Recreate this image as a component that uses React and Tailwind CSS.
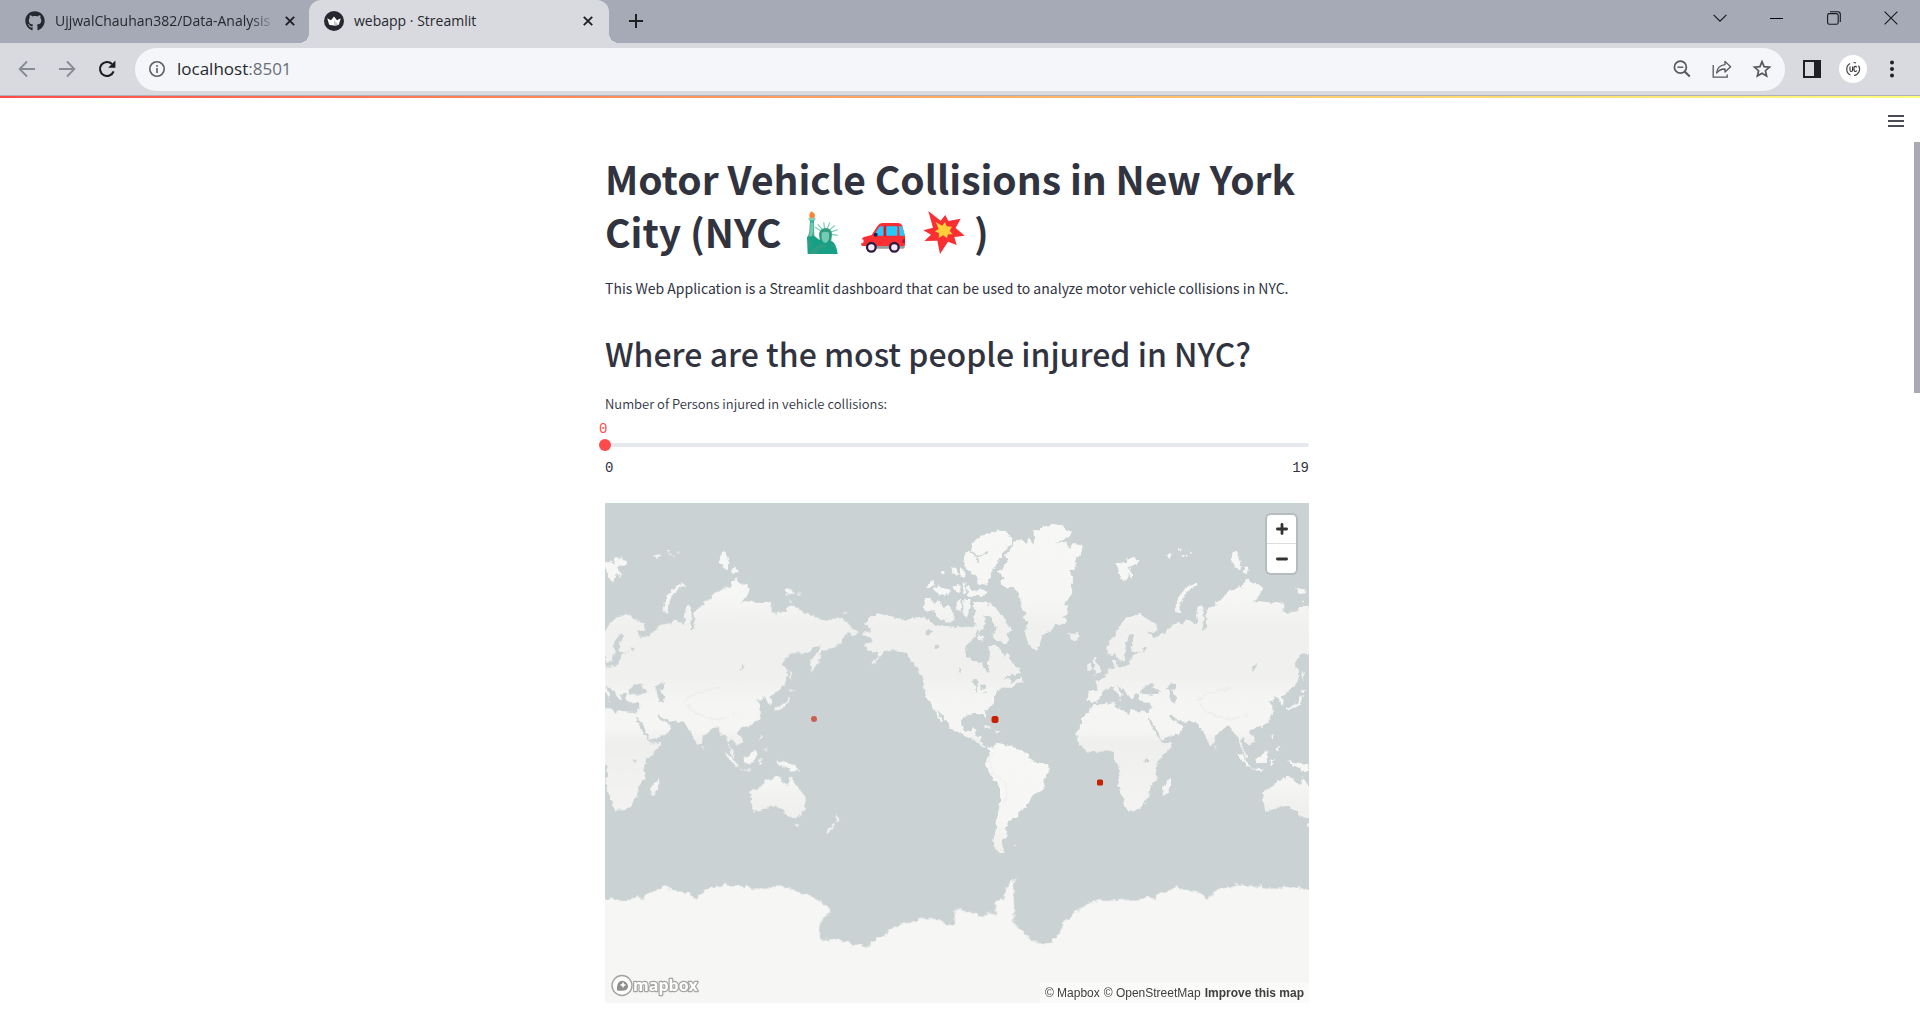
import React, { useState } from "react";
import { FaGithub } from "react-icons/fa";

function CloseIcon() {
  return (
    <svg viewBox="0 0 10 10" className="size-2.5" fill="none" stroke="#1f2024" strokeWidth="1.9">
      <path d="M.8.8 9.2 9.2M9.2.8.8 9.2" />
    </svg>
  );
}

function CrownIcon() {
  return (
    <svg viewBox="0 0 20 20" className="size-5 shrink-0">
      <circle cx="10" cy="10" r="10" fill="#262730" />
      <path d="M3.2 7.2 7 9.3 10 5.6 13 9.3 16.8 7.2 14.8 13.8Q10 15.2 5.2 13.8Z" fill="#fff" />
      <path d="M10 9 14.6 13.9Q12 14.6 10 14.7Z" fill="#c9cad0" />
    </svg>
  );
}

function Tab({ icon, title, active }) {
  return (
    <div
      role="tab"
      aria-selected={active}
      className={
        active
          ? "relative flex h-full w-75 items-center rounded-t-xl bg-[#d9dae0] pb-0.5 pl-[15px] pr-[11px]"
          : "relative flex h-full w-[309px] items-center pb-0.5 pl-[25px] pr-[9px]"
      }
    >
      {active && (
        <>
          <span className="absolute -left-2.5 bottom-0 size-2.5 bg-[radial-gradient(circle_at_0_0,#a6a9b6_10px,#d9dae0_10px)]" />
          <span className="absolute -right-2.5 bottom-0 size-2.5 bg-[radial-gradient(circle_at_100%_0,#a6a9b6_10px,#d9dae0_10px)]" />
        </>
      )}
      {icon}
      <span
        className={
          active
            ? "ml-2.5 flex-1 overflow-hidden whitespace-nowrap"
            : "ml-2.5 flex-1 overflow-hidden whitespace-nowrap [mask-image:linear-gradient(to_right,#000_88%,transparent)]"
        }
      >
        {title}
      </span>
      <button aria-label={"Close " + title} className="ml-1 grid size-5 place-items-center">
        <CloseIcon />
      </button>
    </div>
  );
}

function BrowserChrome() {
  return (
    <header className="font-['Open_Sans',sans-serif] text-[#26282d]">
      <div className="flex h-[43px] bg-[#a6a9b6] text-sm">
        <div role="tablist" className="flex h-full">
          <Tab icon={<FaGithub className="size-5 shrink-0 text-[#24292f]" />} title="UjjwalChauhan382/Data-Analysis" />
          <Tab icon={<CrownIcon />} title="webapp · Streamlit" active />
        </div>
        <button aria-label="New tab" className="ml-[17px] grid w-5 place-items-center pb-0.5">
          <svg viewBox="0 0 16 16" className="size-4" stroke="#1f2024" strokeWidth="2">
            <path d="M8 1v14M1 8h14" />
          </svg>
        </button>
        <div className="ml-auto flex h-9 items-center">
          <button aria-label="Search tabs" className="grid w-[57px] place-items-center">
            <svg viewBox="0 0 14 8" className="h-2 w-3.5" fill="none" stroke="#17181c" strokeWidth="1.1">
              <path d="M.6.8 7 7.2 13.4.8" />
            </svg>
          </button>
          <button aria-label="Minimize" className="grid w-[57px] place-items-center">
            <span className="h-px w-[13px] bg-black" />
          </button>
          <button aria-label="Restore" className="grid w-[57px] place-items-center">
            <svg viewBox="0 0 14 14" className="size-3.5" fill="none" stroke="#17181c" strokeWidth="1.1">
              <rect x=".6" y="2.6" width="10.6" height="10.6" rx="1.8" />
              <path d="M3 .8h7.8a2.5 2.5 0 0 1 2.5 2.5v7.6" />
            </svg>
          </button>
          <button aria-label="Close window" className="grid w-[58px] place-items-center">
            <svg viewBox="0 0 14 14" className="size-3.5" stroke="#17181c" strokeWidth="1.1">
              <path d="M.6.6 13.4 13.4M13.4.6.6 13.4" />
            </svg>
          </button>
        </div>
      </div>

      <div className="flex h-[53px] items-center border-b border-[#aeb0ba] bg-[#d9dae0] pl-[17px] pr-[18px]">
        <button aria-label="Back" className="grid w-5 place-items-center">
          <svg viewBox="0 0 18 18" className="size-[18px]" fill="none" stroke="#898b92" strokeWidth="1.8">
            <path d="M17 9H2M9 1.5 1.6 9 9 16.5" />
          </svg>
        </button>
        <button aria-label="Forward" className="ml-5 grid w-5 place-items-center">
          <svg viewBox="0 0 18 18" className="size-[18px]" fill="none" stroke="#898b92" strokeWidth="1.8">
            <path d="M1 9h15M9 1.5 16.4 9 9 16.5" />
          </svg>
        </button>
        <button aria-label="Reload" className="ml-5 grid w-5 place-items-center">
          <svg viewBox="0 0 18 18" className="size-[18px]" fill="none" stroke="#1b1c20" strokeWidth="2.1">
            <path d="M15.6 11.4A7 7 0 1 1 14 4" />
            <path d="M17.4.6v7.2h-7.2Z" fill="#1b1c20" stroke="none" />
          </svg>
        </button>
        <div className="ml-[18px] flex h-[43px] flex-1 items-center rounded-full bg-[#f5f6f9] pl-3.5 pr-[13px]">
          <svg viewBox="0 0 16 16" className="size-4 shrink-0" fill="none" stroke="#5c5e63" strokeWidth="1.6">
            <circle cx="8" cy="8" r="7.2" />
            <path d="M8 7v5M8 4v1.7" />
          </svg>
          <div className="ml-3 flex-1 text-[17px]">
            <span>localhost</span>
            <span className="text-[#6b6e75]">:8501</span>
          </div>
          <div className="flex items-center gap-5 text-[#55575c]">
            <button aria-label="Zoom" className="grid size-5 place-items-center">
              <svg viewBox="0 0 18 18" className="size-[18px]" fill="none" stroke="currentColor" strokeWidth="1.7">
                <circle cx="7.4" cy="7.2" r="6" />
                <path d="M4.4 7.2h6" strokeWidth="1.4" />
                <path d="m11.6 11.4 5.2 5.2" strokeWidth="2.1" />
              </svg>
            </button>
            <button aria-label="Share this page" className="grid size-5 place-items-center">
              <svg viewBox="0 0 20 18" className="h-[18px] w-5" fill="none" stroke="currentColor" strokeWidth="1.3">
                <path d="M1.2 5v12.2h14V14.5" />
                <path d="M13 1.4 18.6 6.8 13 12V9Q8 8.8 4.6 13 5.4 5.4 13 4.6Z" strokeLinejoin="round" />
              </svg>
            </button>
            <button aria-label="Bookmark this tab" className="grid size-5 place-items-center">
              <svg viewBox="0 0 20 20" className="size-5" fill="none" stroke="currentColor" strokeWidth="1.7">
                <path d="m10 2.600 2.100 5 5.400.5-4.100 3.600 1.200 5.300L10 14.200 5.400 17l1.200-5.300L2.500 8.100l5.400-.5Z" />
              </svg>
            </button>
          </div>
        </div>
        <button aria-label="Side panel" className="ml-[18px] grid w-[18px] place-items-center">
          <span className="h-[18px] w-[18px] border-2 border-r-[7px] border-[#1f2024]" />
        </button>
        <button aria-label="Profile" className="ml-[18px] grid size-7 place-items-center rounded-full bg-white">
          <svg viewBox="0 0 28 28" className="size-7" fill="none" stroke="#444" strokeWidth="1.2">
            <path d="M11 8.500A6.500 6.500 0 0 0 11.500 20M14.500 7.500Q16 7.500 17 8M19.500 10.500A6.500 6.500 0 0 1 15 20.500" />
            <g strokeWidth="1.1" stroke="#333">
              <path d="M11 11.500v3.500q0 1.500 1.300 1.500t1.300-1.500v-3.500M17.600 12.400q-.3-1-1.300-1-1.300 0-1.300 1.500v2q0 1.600 1.300 1.600 1 0 1.300-1" />
            </g>
          </svg>
        </button>
        <button aria-label="Menu" className="ml-[15px] grid w-5 place-items-center">
          <svg viewBox="0 0 4 18" className="h-[18px] w-1" fill="#1f2024">
            <circle cx="2" cy="2.5" r="2" />
            <circle cx="2" cy="9" r="2" />
            <circle cx="2" cy="15.5" r="2" />
          </svg>
        </button>
      </div>
    </header>
  );
}

function Statue() {
  return (
    <svg role="img" aria-label="Statue of Liberty" viewBox="61 33 132 132" className="mx-1 inline-block size-11 align-[-7px]">
      <path d="M89 47q0-8 6-13l8 6q6 8 0 14h-12Z" fill="#ff822d" />
      <path d="M86 53h22l-2 9h-18Z" fill="#7fd1bd" />
      <path d="M91 61h12l1 52-16 12-6-8 7-22Z" fill="#4aa88e" />
      <path d="M93 68h8v28l-12 24-3-4 6-24Z" fill="#73cbb3" />
      <g stroke="#73cbb3" strokeWidth="3.4">
        <path d="m124 92-18-10M128 88 114 73M135 86l-3-19M143 86l7-18M149 90l17-14M153 96l21-7M154 103l20 3" />
      </g>
      <path d="M118 104q2-20 20-20t19 20l-3 22h-33Z" fill="#319b81" />
      <path d="M82 110l22-2 16 12 34 2q16 6 20 40H84Z" fill="#16a085" />
      <path d="M126 98q12-6 22 0v18q-4 12-11 13-9-3-11-13Z" fill="#73cbb3" />
      <path d="M84 162q28-28 48-30l14 6q-26 2-34 24ZM148 128l20 12-8 2ZM84 112l14 22-12 12Z" fill="#2f9d83" />
    </svg>
  );
}

function Car() {
  return (
    <svg role="img" aria-label="Car" viewBox="243 33 132 132" className="mx-1 inline-block size-11 align-[-7px]">
      <path d="M262 134h112v8q0 4-4 4H262Z" fill="#9b9b9b" />
      <path d="M245 120q0-8 10-10l20-5 18-28q5-8 14-8h48q9 0 12 8l8 32v25q0 4-4 4H249q-6 0-6-6Z" fill="#f92f33" />
      <path d="m283 104 14-22q2-3 6-3h7v28h-27ZM319 79h33v28h-33ZM357 79h6q4 0 5 4l7 24h-16Z" fill="#26c9fc" />
      <path d="M312 79h6v30h-6Z" fill="#ce1d2b" />
      <circle cx="287" cy="104" r="6" fill="#2c1d4a" />
      <path d="M243 118h6q5 6 0 12h-6Z" fill="#f4f4f4" />
      <path d="M375 116h-4q-7 6-4 13h8Z" fill="#b4133a" />
      <g fill="#f4e9f8" stroke="#321b41" strokeWidth="7">
        <circle cx="274" cy="142" r="13" />
        <circle cx="343" cy="142" r="13" />
      </g>
    </svg>
  );
}

function Burst() {
  return (
    <svg role="img" aria-label="Collision" viewBox="425 33 132 132" className="mx-1 inline-block size-11 align-[-7px]">
      <path d="M444 33 481 62 495 45 504 63 541 56 526 84 553 107 522 111 529 135 503 125 479 162 471 122 432 123 452 104 429 91 458 83Z" fill="#f92f33" />
      <path d="M466 66 486 77 494 66 499 79 515 80 508 92 517 103 503 103 500 114 488 106 475 114 476 100 464 94 475 87Z" fill="#ffcf3b" />
    </svg>
  );
}

function WorldLand() {
  return (
    <>
      <g fill="url(#relief)">
        <path d="M-74 572H-44L-41 560-52 542-34 540-21 528-8 510 8 503 1 484 12 474 15 488 17 499 34 500 54 493 57 480 64 465 72 459 91 456 60 455 56 440 64 425 70 408 64 400 54 403 44 425 38 438 46 452 38 468 36 480 22 488 18 474 9 462 1 468-11 462-14 440-2 420 10 405 20 385 30 368 50 352 85 342 97 352 130 372 137 388 128 396 107 392 118 402 125 415 135 410 155 400 168 388 180 375 200 370 215 370 222 358 240 365 250 375 255 365 252 345 258 320 268 316 274 335 275 370 270 393 280 388 285 365 280 345 290 325 310 318 310 305 330 300 335 285 370 265 390 262 400 240 410 235 415 250 440 253 450 268 440 290 420 308 440 303 490 310 495 303 513 310 515 335 527 342 530 335 560 335 562 320 575 317 605 328 610 340 640 345 650 355 690 362 700 352 720 355 745 370 758 385 772 395 765 408 750 400 740 400 728 415 725 430 700 440 690 450 665 452 660 465 655 490 645 500 635 518 630 495 633 480 655 455 665 433 650 440 640 440 625 458 600 458 572 460 560 472 545 495 560 508 562 525 555 548 540 565 525 580 508 590 515 610 508 617 502 605 495 592 487 592 480 602 467 600 480 612 483 640 475 660 455 675 430 682 415 690 412 700 428 715 425 728 410 738 400 725 390 712 387 730 394 750 405 765 405 780 390 757 382 725 378 708 365 705 355 680 345 680 330 690 308 710 305 730 295 740 285 720 275 695 262 680 250 665 215 665 190 655 175 643 170 645 180 660 200 668 215 680 205 700 150 720 135 690 120 665 110 652 108 655 125 690 145 720 150 730 180 728 180 735 165 755 135 785 130 810 137 835 115 860 112 885 95 915 75 930 43 932 35 900 26 880 16 850 22 825 19 800 7 780 6 757-16 750-36 755-74 755-96 735-106 715-108 700-101 690-86 650-61 622-54 612-26 613 7 605 9 622 34 630 49 639 54 630 79 634 109 637 118 620 117 607 100 608 85 605 78 595 80 583 72 580 62 586 66 598 60 601 50 588 38 572 26 562 14 556 24 572 34 585 28 588 24 597 18 582 8 570-2 558-10 568-21 570-34 588-46 605-61 605-74 600Z" />
        <path d="M-56 470-46 472-50 485-36 500-32 515-36 522-54 525-46 512-56 505-52 495-60 490ZM-74 515V497L-64 488-62 500-66 515ZM187 330 200 290 220 265 250 248 257 255 230 270 212 295 202 325 206 342 192 335ZM358 185 362 155 375 152 388 190 385 208 370 200ZM392 215 402 198 413 212 400 222ZM550 265 580 268 582 280 560 283ZM590 278 605 282 595 284ZM568 302H576V306H568ZM728 337 742 337 736 342ZM523 632 525 622 545 618 560 605 562 588 569 590 568 605 555 620 540 628ZM563 570 584 570 572 578ZM570 510 576 520 575 540 568 530ZM305 737 311 744 308 748ZM160 168 168 162 182 160 172 174ZM200 146 212 148 206 158ZM205 162H216L212 168ZM220 164 228 166 222 172ZM232 156 242 158 234 161ZM28 600 32 606 24 604Z" />
        <g transform="translate(-96)">
          <path d="M107 188 125 185 140 192 138 176 160 172 176 182 170 195 145 200 160 225 158 236 148 220 132 248 120 230 115 210Z" />
        </g>
        <g transform="translate(0 540)">
          <path d="M450 335 480 322 500 300 520 297 525 288 545 293 543 305 565 315 572 290 580 305 590 320 617 350 615 385 600 410 585 415 565 410 550 390 525 378 500 382 480 393 460 395 455 370ZM583 430H597L594 441 586 440ZM705 402 722 415 712 428 708 415ZM705 430 700 443 683 462 678 455 690 440ZM525 240 543 246 585 252 602 278 590 272 572 276 562 262 540 256ZM430 235 450 225 465 208 470 225 460 248 435 250ZM373 217 395 230 417 260 405 258 385 235ZM417 265 455 268 452 272 420 269ZM474 240 486 236 480 244 488 252 480 256ZM478 170 485 160 482 182ZM490 205 502 200 500 211ZM150 325 175 292 178 305 165 345 153 347Z" />
        </g>
        <g transform="translate(900)">
          <path d="M-92 355-68 340-20 350 15 362 50 352 75 355 95 368 110 377 140 378 165 380 190 382 215 385 225 370 235 385 228 400 222 412 205 430 195 455 200 472 225 482 245 490 255 510 265 518 268 505 262 490 272 475 268 460 265 435 285 435 300 450 315 470 322 460 335 485 355 505 360 520 320 530 310 540 330 537 332 552 345 545 360 532 372 545 350 550 335 560 315 560 295 570 285 590 275 615 255 635 258 660 252 655 245 642 220 642 190 650 183 670 190 692 215 692 218 685 228 688 222 703 240 710 247 732 265 742 245 738 225 720 200 708 180 703 152 685 140 665 125 645 106 622 130 665 126 668 108 642 92 610 75 590 70 560 72 540 55 510 35 485 20 462 0 452-25 450-45 452-55 465-75 490-90 490-65 470-65 455-85 458-105 440-100 430-85 425-90 412-112 405-110 397-90 398-88 385-108 372Z" />
          <path d="M220 305 235 302 250 308 265 305 280 315 290 330 310 350 330 385 335 395 320 400 328 420 315 435 300 425 285 420 272 405 285 400 290 385 280 370 275 350 250 348 255 365 240 400 232 385 222 350 232 335 218 322ZM68 325 75 293 95 295 100 310 118 302 130 320 150 318 155 335 168 358 150 370 110 350 100 330 80 335ZM168 310 185 298 182 335 168 325ZM190 300 212 300 208 325 200 360 190 345ZM232 402 252 412 248 422 230 415ZM78 262 90 245 105 238 100 258 85 265ZM100 268 115 255 130 265 148 268 148 280 120 288ZM155 260 180 255 182 278 165 272ZM152 200 170 208 178 225 160 222ZM180 205 195 215 192 235 180 228ZM120 215 132 212 130 222 122 222ZM188 245H196V282H190ZM200 262 210 255 215 272 250 268 262 278 255 288 205 287ZM190 180 200 155 215 148 215 128 240 110 260 100 285 92 310 92 338 112 335 130 310 155 295 185 285 200 278 215 270 235 262 255 230 250 235 235 210 215 195 205Z" />
          <path d="M293 215 325 185 315 165 330 150 340 125 365 118 380 135 385 112 405 135 400 95 430 80 460 72 490 75 500 92 512 100 510 112 465 130 500 125 505 145 515 130 548 137 545 155 525 180 530 200 510 215 520 245 510 260 517 280 505 300 490 310 505 325 500 345 480 355 500 352 495 365 460 378 450 395 428 405 420 430 412 453 395 445 380 420 375 390 383 370 370 350 375 335 362 320 360 285 345 265 310 260 300 245 315 235ZM500 398 515 402 535 396 540 408 525 422 508 418 512 408ZM250 675 262 677 278 687 268 686ZM286 690 305 696 290 697Z" />
          <g transform="translate(0 660)">
            <path d="M262 82 272 84 290 68 330 75 345 85 380 98 385 115 415 130 440 132 450 148 435 175 430 205 420 215 395 225 388 250 370 270 355 275 355 290 335 295 322 310 318 335 320 350 308 360 308 385 317 397 300 400 285 385 280 360 287 330 292 290 300 250 300 195 278 180 265 150 256 140 260 120 272 105ZM344 374H350V378H344Z" />
          </g>
        </g>
      </g>
      <path
        transform="translate(0 540)"
        fill="#f6f6f4"
        d="M15 658 40 656 68 663 90 657 110 648 130 658 140 640 180 628 195 615 212 628 270 640 285 657 325 622 370 620 374 607 378 615 420 617 430 625 443 614 455 626 510 626 518 620 550 620 585 630 610 643 630 647 660 665 690 682 690 700 668 715 660 745 660 770 668 783 680 777 710 778 745 785 755 793 790 796 803 802 830 772 850 772 870 745 915 730 955 720 962 708 970 714 1020 718 1040 735 1065 733 1063 690 1090 688 1095 697 1130 700 1150 712 1168 695 1190 707 1185 690 1190 675 1178 672 1200 655 1213 660 1216 630 1230 608 1255 592 1239 610 1241 640 1243 700 1238 727 1270 755 1292 780 1315 790 1348 790 1385 752 1392 720 1410 717 1420 700 1450 680 1460 670 1500 660 1520 664 1556 657V1100H10V658Z"
      />
      <g fill="#cad2d3">
        <path d="M85 578 88 570 100 557 118 550 128 552 122 562 140 570 140 578 120 584 95 582ZM165 562 180 550 192 552 192 565 178 570 185 580 193 590 192 607 178 605 172 590 174 578ZM418 512 430 492 433 497 424 511ZM98 778 108 776 109 786 98 788ZM90 445 100 440 105 448 96 455Z" />
        <path transform="translate(900)" d="M72 400 85 388 97 396 84 407ZM103 440 115 434 119 441 108 448ZM177 505 184 508 186 516 179 513ZM212 546 225 538 240 545 236 553 232 550 230 580 225 575 226 553ZM240 560 250 552 260 562 245 570ZM245 580 260 576 258 580ZM258 314 268 312 266 322Z" />
      </g>
      <path d="M1112 152Q1122 170 1135 168T1164 156M1130 172 1136 188" fill="none" stroke="#cad2d3" strokeWidth="5" />
      <g fill="none" stroke="#e2e3e2" strokeWidth="3" strokeLinecap="round" opacity=".75">
        <path d="M262 615Q285 640 320 652T380 652M250 602 290 580 360 562M400 648 410 636" />
        <path d="M1190 740 1168 780 1180 820 1216 850 1222 880 1212 910" strokeWidth="2" />
      </g>
    </>
  );
}

function WorldMap() {
  return (
    <svg
      role="img"
      aria-label="World map with collision locations"
      viewBox="0 0 704 500"
      preserveAspectRatio="xMidYMid slice"
      className="block h-[500px] w-full bg-[#cad2d3]"
    >
      <defs>
        <linearGradient id="relief" gradientUnits="userSpaceOnUse" x1="0" y1="60" x2="0" y2="960">
          <stop offset="0" stopColor="#f7f7f5" />
          <stop offset=".26" stopColor="#f6f6f4" />
          <stop offset=".36" stopColor="#f0f0ee" />
          <stop offset=".52" stopColor="#f0f0ee" />
          <stop offset=".6" stopColor="#f5f5f3" />
          <stop offset=".7" stopColor="#f5f5f3" />
          <stop offset=".74" stopColor="#efefed" />
          <stop offset=".9" stopColor="#f2f2f0" />
          <stop offset="1" stopColor="#f4f4f2" />
        </linearGradient>
        <filter id="coast" x="0" y="0" width="100%" height="100%">
          <feTurbulence type="fractalNoise" baseFrequency="0.22" numOctaves="2" seed="4" result="noise" />
          <feDisplacementMap in="SourceGraphic" in2="noise" scale="5" xChannelSelector="R" yChannelSelector="G" />
        </filter>
        <g id="world">
          <WorldLand />
        </g>
      </defs>
      <g filter="url(#coast)">
        <rect x="-20" y="-20" width="744" height="540" fill="#cad2d3" />
        <g transform="translate(-5 -3) scale(.33333)">
          <use href="#world" x="-1536" />
          <use href="#world" />
          <use href="#world" x="1536" />
        </g>
      </g>
      <circle cx="209" cy="216" r="3" fill="#cb5f50" />
      <rect x="386.500" y="213" width="7" height="7" rx="2.500" fill="#c91e00" />
      <rect x="492" y="276.500" width="6" height="6" rx="1.500" fill="#c91e00" />
    </svg>
  );
}

function MapboxLogo() {
  return (
    <svg viewBox="0 0 100 23" className="h-[23px] w-25">
      <circle cx="11" cy="11.500" r="10" fill="#fff" stroke="#a3a3a1" strokeWidth="1.4" />
      <path d="M6 16.500Q5.500 10.500 8 8a5.500 5.500 0 0 1 7.800 7.600Q13 17.500 6 16.500Z" fill="#8f8f8d" />
      <path d="m12 7.600 1 2.300 2.300 1-2.300 1-1 2.300-1-2.300-2.300-1 2.300-1Z" fill="#fff" />
      <text
        x="22"
        y="17"
        fontFamily="Open Sans, sans-serif"
        fontWeight="700"
        fontSize="16"
        fill="#fff"
        stroke="#a3a3a1"
        strokeWidth="2.4"
        paintOrder="stroke"
        strokeLinejoin="round"
      >
        mapbox
      </text>
    </svg>
  );
}

function InjurySlider() {
  const [value, setValue] = useState(0);
  return (
    <div>
      <label htmlFor="injured" className="block text-[13px] font-[350] leading-5">
        Number of Persons injured in vehicle collisions:
      </label>
      <div className="relative mt-[25px] h-3">
        <output
          htmlFor="injured"
          className="absolute -top-5 -ml-1.5 font-['Liberation_Mono',monospace] text-sm leading-5 text-[#ff4b4b]"
          style={{ left: (value / 19) * 100 + "%" }}
        >
          {value}
        </output>
        <div className="absolute inset-x-0 top-1 h-1 rounded-sm bg-[#e6e8f0]" />
        <input
          id="injured"
          type="range"
          min="0"
          max="19"
          value={value}
          onChange={(e) => setValue(Number(e.target.value))}
          className="absolute -left-1.5 top-0 block h-3 w-[calc(100%+12px)] appearance-none bg-transparent [&::-webkit-slider-thumb]:size-3 [&::-webkit-slider-thumb]:appearance-none [&::-webkit-slider-thumb]:rounded-full [&::-webkit-slider-thumb]:bg-[#ff4b4b]"
        />
      </div>
      <div className="mt-[7px] flex justify-between font-['Liberation_Mono',monospace] text-sm leading-5">
        <span>0</span>
        <span>19</span>
      </div>
    </div>
  );
}

export default function App() {
  return (
    <div className="flex h-screen flex-col overflow-hidden bg-white">
      <BrowserChrome />
      <div className="h-0.5 shrink-0 bg-linear-to-r from-[#ff4b4b] to-[#fffd80]" />
      <div className="relative flex-1 overflow-hidden">
        <button aria-label="App menu" className="absolute right-4 top-[17px] flex w-4 flex-col gap-[3px]">
          <span className="h-0.5 w-full bg-[#4a4b57]" />
          <span className="h-0.5 w-full bg-[#4a4b57]" />
          <span className="h-0.5 w-full bg-[#4a4b57]" />
        </button>
        <div className="absolute right-0 top-11 h-[251px] w-1.5 bg-[#a9aab2]" />
        <main className="mx-auto w-full max-w-[710px] pr-1.5 pt-[54px] font-['Noto_Sans_CJK_JP',sans-serif] text-[#31333f]">
          <h1 className="text-[39px] font-bold leading-[53px]">
            Motor Vehicle Collisions in New York City (NYC{" "}
            <span className="ml-1.5 mr-1">
              <Statue /> <Car /> <Burst />
            </span>
            )
          </h1>
          <p className="mt-[18px] text-sm leading-6">
            This Web Application is a Streamlit dashboard that can be used to analyze motor vehicle collisions in NYC.
          </p>
          <h2 className="mt-8 text-[32px] font-medium leading-[43px]">Where are the most people injured in NYC?</h2>
          <div className="mt-[19px]">
            <InjurySlider />
          </div>
          <div className="relative mt-[25px]">
            <WorldMap />
            <div className="absolute right-[13px] top-3 w-[29px] divide-y divide-[#ddd] rounded-sm bg-white shadow-[0_0_0_2px_rgba(0,0,0,0.1)]">
              <button aria-label="Zoom in" className="grid h-[29px] w-full place-items-center">
                <svg viewBox="0 0 12 12" className="size-3" stroke="#333" strokeWidth="2.8" strokeLinecap="round">
                  <path d="M6 1.400v9.200M1.400 6h9.200" />
                </svg>
              </button>
              <button aria-label="Zoom out" className="grid h-[29px] w-full place-items-center">
                <svg viewBox="0 0 12 12" className="size-3" stroke="#333" strokeWidth="2.8" strokeLinecap="round">
                  <path d="M1.400 6h9.200" />
                </svg>
              </button>
            </div>
            <a href="#mapbox" aria-label="Mapbox" className="absolute bottom-1.5 left-1.5">
              <MapboxLogo />
            </a>
            <div className="absolute bottom-0 right-0 flex gap-1 bg-white/50 px-[5px] font-['Liberation_Sans',sans-serif] text-xs leading-5 text-[#404040]">
              <a href="#about">© Mapbox</a>
              <a href="#osm">© OpenStreetMap</a>
              <a href="#improve" className="font-bold">Improve this map</a>
            </div>
          </div>
        </main>
      </div>
    </div>
  );
}
